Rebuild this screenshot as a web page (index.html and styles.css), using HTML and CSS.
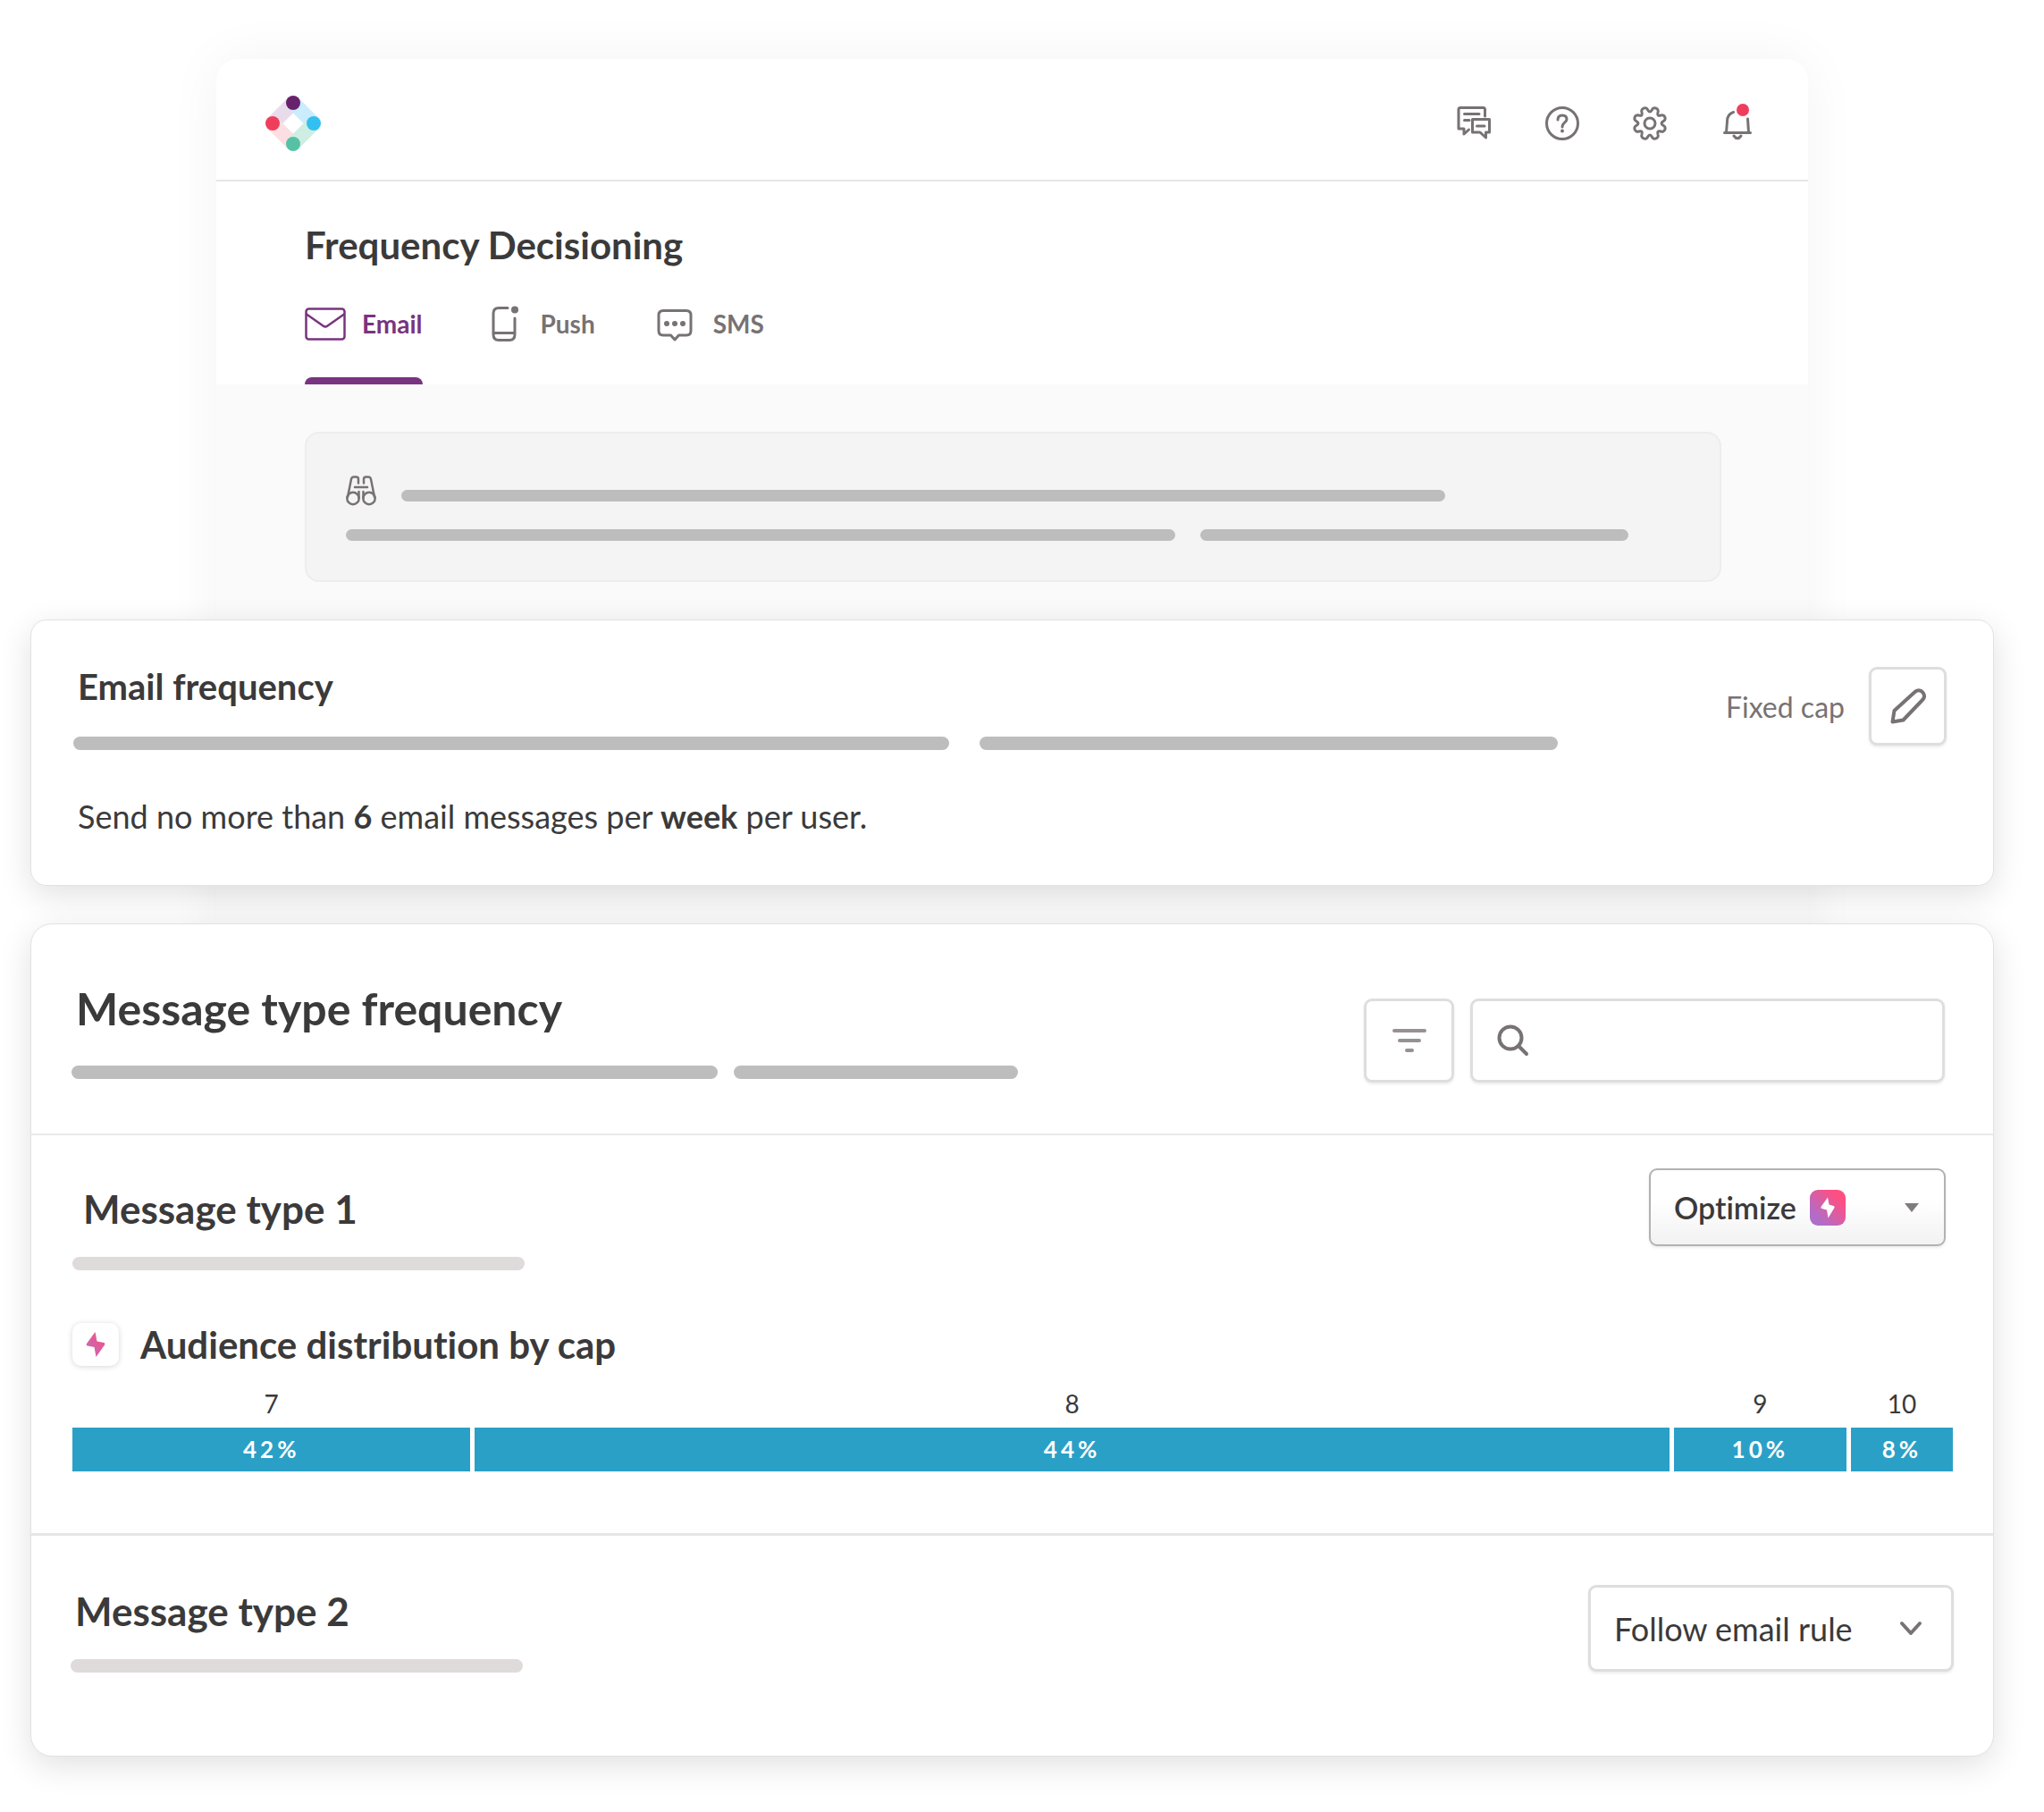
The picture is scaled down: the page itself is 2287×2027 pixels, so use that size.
FILE: index.html
```html
<!DOCTYPE html>
<html lang="en">
<head>
    <meta charset="UTF-8">
    <meta name="viewport" content="width=device-width, initial-scale=1.0">
    <title>Frequency Decisioning</title>
    <link rel="stylesheet" href="styles.css">
</head>
<body>

<div class="panel">
    <header class="topbar">
        <a href="#" class="logo" aria-label="Home">
            <svg width="62" height="62" viewBox="0 0 62 62">
                <g stroke-width="16">
                    <path d="M31 8 8 31" stroke="#e8dcec"/>
                    <path d="M31 8 54 31" stroke="#caecfd"/>
                    <path d="M8 31 31 54" stroke="#fddfe3"/>
                    <path d="M54 31 31 54" stroke="#cfeee3"/>
                </g>
                <circle cx="31" cy="8" r="8" fill="#68226c"/>
                <circle cx="8" cy="31" r="8" fill="#ef3e5b"/>
                <circle cx="54" cy="31" r="8" fill="#33bff0"/>
                <circle cx="31" cy="54" r="8" fill="#56c1a5"/>
            </svg>
        </a>
        <nav class="topbar-actions">
            <button class="icon-button" aria-label="Messages">
                <svg class="icon" width="40" height="40" viewBox="0 0 40 40">
                    <path d="M31.500 12V4.500Q31.500 2.500 29.500 2.500H4Q2 2.500 2 4.500V26H8V32L13.500 27M8.500 9.500H25M8.500 16.500H14"/>
                    <path d="M17.500 15.500H36.500V30H32.500V36L26 30H17.500ZM22.500 23H31"/>
                </svg>
            </button>
            <button class="icon-button" aria-label="Help">
                <svg class="icon" width="40" height="40" viewBox="0 0 40 40">
                    <circle cx="20" cy="20" r="17.500"/>
                    <path d="M15 16Q15 11 20 11Q25 11 25 15.500C25 19 20 19 20 24"/>
                    <circle class="solid" cx="20" cy="28.500" r="2"/>
                </svg>
            </button>
            <button class="icon-button" aria-label="Settings">
                <svg class="icon" width="40" height="40" viewBox="-20 -20 40 40">
                    <path d="M2.340-15.060C4.100-19.300 10.760-16.550 9-12.300Q7.700-7.700 12.300-9C16.550-10.760 19.300-4.100 15.060-2.340Q11 0 15.060 2.340C19.300 4.100 16.550 10.760 12.300 9Q7.700 7.700 9 12.300C10.760 16.550 4.100 19.300 2.340 15.060Q0 11-2.340 15.060C-4.100 19.300-10.760 16.550-9 12.300Q-7.700 7.700-12.300 9C-16.550 10.760-19.300 4.100-15.060 2.340Q-11 0-15.060-2.340C-19.300-4.100-16.550-10.760-12.300-9Q-7.700-7.700-9-12.300C-10.760-16.550-4.100-19.300-2.340-15.060Q0-11 2.340-15.060Z"/>
                    <circle cx="0" cy="0" r="6"/>
                </svg>
            </button>
            <button class="icon-button" aria-label="Notifications">
                <svg class="icon" width="40" height="40" viewBox="0 0 40 40">
                    <path d="M15.500 7.500C10.500 9 8.500 13 8.500 18L7.500 30M31.500 15L32.500 30M5.500 30.500H34.500M16 34Q20 39.500 24 34"/>
                    <circle cx="26" cy="5" r="7" class="alert"/>
                </svg>
            </button>
        </nav>
    </header>

    <div class="panel-head">
        <h1>Frequency Decisioning</h1>
        <div class="tabs">
            <button class="tab active">
                <svg class="icon thin" width="46" height="40" viewBox="0 0 46 40">
                    <rect x="1.500" y="3.500" width="43" height="34" rx="3"/>
                    <path d="M2 9.500 20.500 22.500Q23 24.500 25.500 22.500L44 9.500"/>
                </svg>
                Email
            </button>
            <button class="tab">
                <svg class="icon" width="46" height="40" viewBox="0 0 46 40">
                    <path d="M27 2.500H17Q11 2.500 11 8.500V32Q11 38.500 17 38.500H29Q35 38.500 35 32V14M11 30.500H35"/>
                    <circle class="solid" cx="35" cy="4.500" r="4"/>
                </svg>
                Push
            </button>
            <button class="tab">
                <svg class="icon" width="46" height="40" viewBox="0 0 46 40">
                    <path d="M8 5.500H34Q39 5.500 39 10.500V28Q39 33 34 33H25.500L21 38 16.500 33H8Q3 33 3 28V10.500Q3 5.500 8 5.500Z"/>
                    <circle class="solid" cx="12" cy="20" r="3"/>
                    <circle class="solid" cx="21" cy="20" r="3"/>
                    <circle class="solid" cx="30" cy="20" r="3"/>
                </svg>
                SMS
            </button>
        </div>
    </div>

    <div class="panel-body">
        <div class="callout">
            <div class="callout-row">
                <svg class="icon thin" width="34" height="44" viewBox="0 0 34 44">
                    <path d="M2 24 6 4Q6.500 1.500 9 1.500H11.500Q14 1.500 14 4V8.500M32 24 28 4Q27.500 1.500 25 1.500H22.500Q20 1.500 20 4V8.500M10 13H24M14.500 18V25M19.500 18V25"/>
                    <circle cx="8" cy="25.500" r="6.700"/>
                    <circle cx="26" cy="25.500" r="6.700"/>
                </svg>
                <span class="line w78"></span>
            </div>
            <div class="callout-row">
                <span class="line w62"></span>
                <span class="line w32"></span>
            </div>
        </div>
    </div>
</div>

<div class="cards">
    <section class="card email-card">
        <div class="card-head">
            <div class="card-title">
                <h2>Email frequency</h2>
                <div class="lines">
                    <span class="line w53"></span>
                    <span class="line w35"></span>
                </div>
            </div>
            <div class="card-tools">
                <span class="cap-label">Fixed cap</span>
                <button class="square-button edit-button" aria-label="Edit">
                    <svg class="icon bold" width="40" height="40" viewBox="0 0 40 40">
                        <path d="M2.500 37.500 4.500 25 27 4.500C30 1.500 34 1.800 36.300 4.500C38.500 7.200 38.500 10.500 36 13L14.500 35.500Z"/>
                    </svg>
                </button>
            </div>
        </div>
        <p>Send no more than <strong>6</strong> email messages per <strong>week</strong> per user.</p>
    </section>

    <section class="card">
        <div class="type-head">
            <div class="card-title">
                <h2>Message type frequency</h2>
                <div class="lines">
                    <span class="line w50"></span>
                    <span class="line w22"></span>
                </div>
            </div>
            <div class="type-tools">
                <button class="square-button filter-button" aria-label="Filter">
                    <svg class="icon filter-icon" width="40" height="28" viewBox="0 0 40 28">
                        <path d="M3 3H37M9 14H31M17 25H23"/>
                    </svg>
                </button>
                <label class="search">
                    <svg class="icon search-icon" width="36" height="36" viewBox="0 0 36 36">
                        <circle cx="15" cy="15" r="12.500"/>
                        <path d="M24 24 33 33"/>
                    </svg>
                    <input type="text" aria-label="Search message types">
                </label>
            </div>
        </div>

        <div class="type-row optimized">
            <div class="row-head">
                <div>
                    <h3>Message type 1</h3>
                    <span class="line light"></span>
                </div>
                <div class="select-box optimize">
                    <select aria-label="Message type 1 rule">
                        <option>Optimize</option>
                    </select>
                    <svg class="optimize-badge" width="40" height="40" viewBox="0 0 40 40">
                        <defs>
                            <linearGradient id="grad" x1="0" y1="1" x2="1" y2="0">
                                <stop offset="0.200" stop-color="#b06dc8"/>
                                <stop offset="0.800" stop-color="#ff4f80"/>
                            </linearGradient>
                        </defs>
                        <rect width="40" height="40" rx="9" fill="url(#grad)"/>
                        <path d="M20 8.500 12.500 19Q12 20.500 13.500 21L19 22.500 20.500 31.500 27.500 20Q28 18.500 26.500 18L21.500 16.500Z" fill="#fff"/>
                    </svg>
                    <svg class="arrow" width="16" height="10" viewBox="0 0 16 10">
                        <path d="M0 0H16L8 10Z" fill="#807c7d"/>
                    </svg>
                </div>
            </div>
            <div class="audience">
                <span class="bolt-box">
                    <svg width="22" height="28" viewBox="0 0 22 28">
                        <defs>
                            <linearGradient id="bolt" x1="0" y1="1" x2="1" y2="0">
                                <stop offset="0.100" stop-color="#c46bbd"/>
                                <stop offset="0.900" stop-color="#f4517f"/>
                            </linearGradient>
                        </defs>
                        <path d="M10.500 0 1 13Q0 15 2 15.500L9.500 17 11.500 28 21 14.500Q22 12.500 20 12L12.500 10.500Z" fill="url(#bolt)"/>
                    </svg>
                </span>
                <h4>Audience distribution by cap</h4>
            </div>
            <div class="distribution">
                <span>7</span>
                <span>8</span>
                <span>9</span>
                <span>10</span>
                <div class="bar">42%</div>
                <div class="bar">44%</div>
                <div class="bar">10%</div>
                <div class="bar">8%</div>
            </div>
        </div>

        <div class="type-row">
            <div class="row-head">
                <div>
                    <h3>Message type 2</h3>
                    <span class="line light"></span>
                </div>
                <div class="select-box follow">
                    <select aria-label="Message type 2 rule">
                        <option>Follow email rule</option>
                    </select>
                    <svg class="icon bold arrow" width="26" height="18" viewBox="0 0 26 18">
                        <path d="M3 3 13 14 23 3"/>
                    </svg>
                </div>
            </div>
        </div>
    </section>
</div>

</body>
</html>
```
FILE: styles.css
```css
* {
    box-sizing: border-box;
}
body {
    margin: 0;
    padding: 66px 56px 60px 34px;
    background-color: #fff;
    color: #3b3a3a;
    font-family: Lato, "Open Sans", sans-serif;
    font-variant-ligatures: none;
}
h1, h2, h3, h4, p {
    margin: 0;
    font-weight: 700;
}
button, select, input {
    font-family: inherit;
    font-variant-ligatures: none;
    color: inherit;
    cursor: pointer;
}
svg {
    display: block;
    flex: none;
    overflow: visible;
}
.icon {
    fill: none;
    stroke: #777273;
    stroke-width: 3;
    stroke-linecap: round;
    stroke-linejoin: round;
}
.icon.thin {
    stroke-width: 2.5;
}
.icon.bold {
    stroke-width: 4;
}
.icon .solid {
    fill: #777273;
    stroke: none;
}
.icon .alert {
    fill: #ef3e5b;
    stroke: none;
}

/* background panel, runs on behind the cards */
.panel {
    margin: 0 208px;
    padding-bottom: 442px;
    border-radius: 24px;
    background-color: #fafafa;
    box-shadow: 0 0 60px rgba(0, 0, 0, 0.05);
}
.topbar {
    display: flex;
    justify-content: space-between;
    align-items: center;
    height: 137px;
    padding: 9px 59px 0 55px;
    border-bottom: 2px solid #e6e6e6;
    border-radius: 24px 24px 0 0;
    background-color: #fff;
}
.topbar-actions {
    display: flex;
    gap: 58px;
}
.icon-button {
    padding: 0;
    border: none;
    background: none;
}
.panel-head {
    padding: 47px 99px 0;
    background-color: #fff;
}
h1 {
    font-size: 42px;
    line-height: 48px;
}
.tabs {
    display: flex;
    gap: 68px;
}
.tab {
    position: relative;
    display: flex;
    align-items: center;
    gap: 18px;
    padding: 44px 0 48px;
    border: none;
    background: none;
    color: #777273;
    font-size: 28px;
    line-height: 40px;
    font-weight: 700;
}
.tab.active {
    color: #78347f;
}
.tab.active .icon {
    stroke: #78347f;
}
.tab.active::after {
    content: "";
    position: absolute;
    left: 0;
    right: 0;
    bottom: 0;
    height: 8px;
    border-radius: 8px 8px 0 0;
    background-color: #78347f;
}
.panel-body {
    padding: 53px 97px 0 99px;
}
.callout {
    display: flex;
    flex-direction: column;
    gap: 16px;
    padding: 47px 40px 44px 44px;
    border: 2px solid #ededed;
    border-radius: 16px;
    background-color: #f4f4f4;
}
.callout-row {
    display: flex;
    align-items: center;
    gap: 28px;
}

/* placeholder text lines */
.line {
    display: block;
    height: 15px;
    border-radius: 8px;
    background-color: #bebdbd;
}
.line.light {
    width: 506px;
    background-color: #dfdbdb;
}
.callout .line {
    height: 13px;
}
.lines {
    display: flex;
}
.w78 { width: 78%; }
.w62 { width: 62%; }
.w53 { width: 53%; }
.w50 { width: 50%; }
.w35 { width: 35%; }
.w32 { width: 32%; }
.w22 { width: 22%; }

.cards {
    position: relative;
    display: flex;
    flex-direction: column;
    gap: 42px;
    margin-top: -400px;
}
.card {
    border: 1px solid #e2e2e2;
    border-radius: 24px;
    background-color: #fff;
    box-shadow: 0 10px 36px rgba(0, 0, 0, 0.12);
}
.card h2, .card h3, .card p {
    padding-left: 5px;
}
.card-title {
    flex: 1;
}
.email-card {
    padding: 52px 52px 56px 47px;
    border-radius: 18px;
}
.card-head {
    display: flex;
    align-items: flex-start;
}
.email-card h2 {
    margin-bottom: 34px;
    font-size: 40px;
    line-height: 44px;
}
.email-card .lines {
    gap: 34px;
}
.email-card p {
    margin-top: 53px;
    font-size: 36px;
    line-height: 42px;
    font-weight: 400;
}
.card-tools {
    display: flex;
    align-items: center;
    gap: 27px;
}
.cap-label {
    color: #777273;
    font-size: 32px;
}
.square-button, .search, .select-box {
    border: 3px solid #dedede;
    border-radius: 9px;
    background-color: #fff;
    box-shadow: 0 2px 3px rgba(0, 0, 0, 0.08);
}
.square-button {
    display: flex;
    align-items: center;
    justify-content: center;
    padding: 0;
}
.edit-button {
    width: 87px;
    height: 88px;
}

.type-head {
    display: flex;
    align-items: flex-end;
    padding: 66px 54px 57px 45px;
    border-bottom: 2px solid #eaeaea;
}
.type-head .card-title {
    padding-bottom: 4px;
}
.type-head h2 {
    margin-bottom: 36px;
    font-size: 50px;
    line-height: 56px;
}
.type-head .lines {
    gap: 18px;
}
.type-tools {
    display: flex;
    gap: 18px;
}
.filter-button {
    width: 101px;
    height: 94px;
}
.filter-icon {
    stroke: #999092;
    stroke-width: 4;
}
.search-icon {
    stroke-width: 4;
}
.search {
    display: flex;
    align-items: center;
    gap: 20px;
    width: 531px;
    padding: 0 27px;
}
.search input {
    flex: 1;
    min-width: 0;
    border: none;
    outline: none;
    background: none;
    font-size: 32px;
}

.type-row {
    padding: 55px 44px 93px 44px;
}
.type-row + .type-row {
    border-top: 3px solid #e6e6e6;
}
.type-row.optimized {
    padding: 37px 45px 69px 46px;
}
.row-head {
    display: flex;
    justify-content: space-between;
    align-items: flex-start;
}
.row-head h3 {
    margin-bottom: 29px;
    padding-top: 4px;
    font-size: 44px;
    line-height: 50px;
}
.optimized .row-head {
    padding-right: 8px;
}
.optimized .row-head h3 {
    padding: 20px 0 0 12px;
}
.select-box {
    display: grid;
    align-items: center;
}
.select-box > * {
    grid-area: 1 / 1;
}
.select-box svg {
    pointer-events: none;
}
.select-box select {
    appearance: none;
    width: 100%;
    height: 100%;
    padding: 0 26px;
    border: none;
    border-radius: 8px;
    background: none;
}
.select-box .arrow {
    justify-self: end;
}
.optimize {
    width: 332px;
    height: 87px;
    border: 2px solid #b3b1b1;
    background: linear-gradient(#fff 40%, #f2f2f2);
}
.optimize select {
    font-size: 34px;
    font-weight: 600;
}
.optimize .optimize-badge {
    margin-left: 178px;
}
.optimize .arrow {
    margin-right: 28px;
}
.follow {
    width: 409px;
    height: 97px;
}
.follow select {
    font-size: 36px;
}
.follow .arrow {
    margin-right: 32px;
}

.audience {
    display: flex;
    align-items: center;
    gap: 24px;
    margin-top: 59px;
}
.bolt-box {
    display: flex;
    align-items: center;
    justify-content: center;
    width: 52px;
    height: 48px;
    border-radius: 10px;
    box-shadow: 0 1px 6px rgba(0, 0, 0, 0.16);
}
h4 {
    font-size: 42px;
    line-height: 48px;
}
.distribution {
    display: grid;
    grid-template-columns: 445fr 1335fr 193fr 114fr;
    gap: 10px 5px;
    margin-top: 25px;
    text-align: center;
    font-size: 28px;
    line-height: 34px;
}
.bar {
    background-color: #2aa0c7;
    color: #fff;
    font-size: 26px;
    font-weight: 700;
    line-height: 49px;
    letter-spacing: 4px;
}
```
